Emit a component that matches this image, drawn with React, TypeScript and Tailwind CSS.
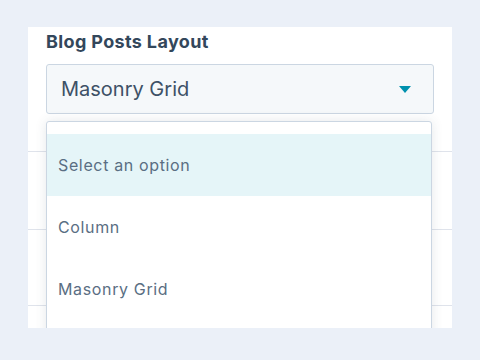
import React from "react";

const OPTIONS = ["Select an option", "Column", "Masonry Grid"];

export default function App() {
  return (
    <div className="h-[360px] w-[480px] bg-[#ebf0f8] px-[28px] pt-[27px] font-['Inter',sans-serif] text-[#33475b]">
      <div className="relative h-[301px] overflow-hidden bg-white">
        <div className="border-b border-[#dfe3eb] px-[18px] pb-[37px] pt-[3px]">
          <div className="text-[18px] font-bold leading-[24px] tracking-[0.02em] text-[#33475b]">Blog Posts Layout</div>
          <div className="mt-[10px] flex h-[50px] items-center justify-between rounded-[3px] border border-[#cbd6e2] bg-[#f5f8fa] pl-[14px] pr-[22px]">
            <span className="text-[20px] leading-none text-[#3d5166]">Masonry Grid</span>
            <svg width="12" height="7" viewBox="0 0 12 7">
              <path d="M0 0 L12 0 L6 7 Z" fill="#0091ae" />
            </svg>
          </div>
        </div>
        <div className="h-[78px] border-b border-[#dfe3eb]" />
        <div className="h-[76px] border-b border-[#dfe3eb]" />

        <div className="absolute left-[18px] top-[94px] h-[260px] w-[386px] rounded-t-[3px] border border-[#cbd6e2] bg-white pt-[12px] shadow-[0_0_12px_rgba(45,62,80,0.12)]">
          {OPTIONS.map((o, i) => (
            <div
              key={o}
              className={
                "flex h-[62px] items-center px-[11px] text-[16px] tracking-[0.04em] text-[#5a6e83] " +
                (i === 0 ? "bg-[#e5f5f8]" : "")
              }
            >
              {o}
            </div>
          ))}
        </div>
      </div>
    </div>
  );
}
